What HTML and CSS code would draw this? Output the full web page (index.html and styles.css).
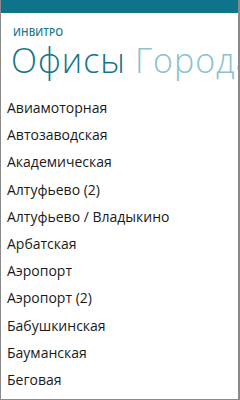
FILE: index.html
```html
<!DOCTYPE html>
<html lang="ru">
<head>
<meta charset="utf-8">
<link rel="stylesheet" href="styles.css">
</head>
<body>
<div class="screen">
  <div class="topbar"></div>
  <div class="content">
    <div class="app-title">ИНВИТРО</div>
    <div class="pivot">
      <span class="pivot-item active">Офисы</span>
      <span class="pivot-item">Города</span>
    </div>
    <ul class="list">
      <li>Авиамоторная</li>
      <li>Автозаводская</li>
      <li>Академическая</li>
      <li>Алтуфьево (2)</li>
      <li>Алтуфьево / Владыкино</li>
      <li>Арбатская</li>
      <li>Аэропорт</li>
      <li>Аэропорт (2)</li>
      <li>Бабушкинская</li>
      <li>Бауманская</li>
      <li>Беговая</li>
    </ul>
  </div>
</div>
</body>
</html>
```
FILE: styles.css
```css
html, body {
  margin: 0;
  padding: 0;
  background: #ffffff;
}
.screen {
  width: 240px;
  height: 400px;
  box-sizing: border-box;
  border-left: 1px solid #8a8a8a;
  border-right: 2px solid #8a8a8a;
  border-bottom: 1px solid #8a8a8a;
  overflow: hidden;
  display: flex;
  flex-direction: column;
  font-family: "Open Sans", "Noto Sans", sans-serif;
}
.topbar {
  height: 13px;
  background: #0f7489;
  flex: none;
  margin: 0 -2px 0 -1px;
}
.content {
  padding: 12px 0 0 6px;
  display: flex;
  flex-direction: column;
}
.app-title {
  font-size: 10px;
  font-weight: 600;
  color: #1d7a8f;
  padding-left: 6px;
  line-height: 14px;
  height: 14px;
  letter-spacing: 0.1px;
}
.pivot {
  display: flex;
  gap: 9px;
  white-space: nowrap;
  padding-left: 4px;
  margin-top: 1px;
  height: 40px;
}
.pivot-item {
  font-size: 34px;
  font-weight: 300;
  line-height: 40px;
  letter-spacing: 1px;
  color: #8cc1cd;
}
.pivot-item.active {
  color: #15758a;
}
.list {
  list-style: none;
  margin: 14px 0 0 0;
  padding: 0;
}
.list li {
  font-size: 14px;
  line-height: 27.2px;
  height: 27.2px;
  color: #1a1a1a;
  white-space: nowrap;
}
```
